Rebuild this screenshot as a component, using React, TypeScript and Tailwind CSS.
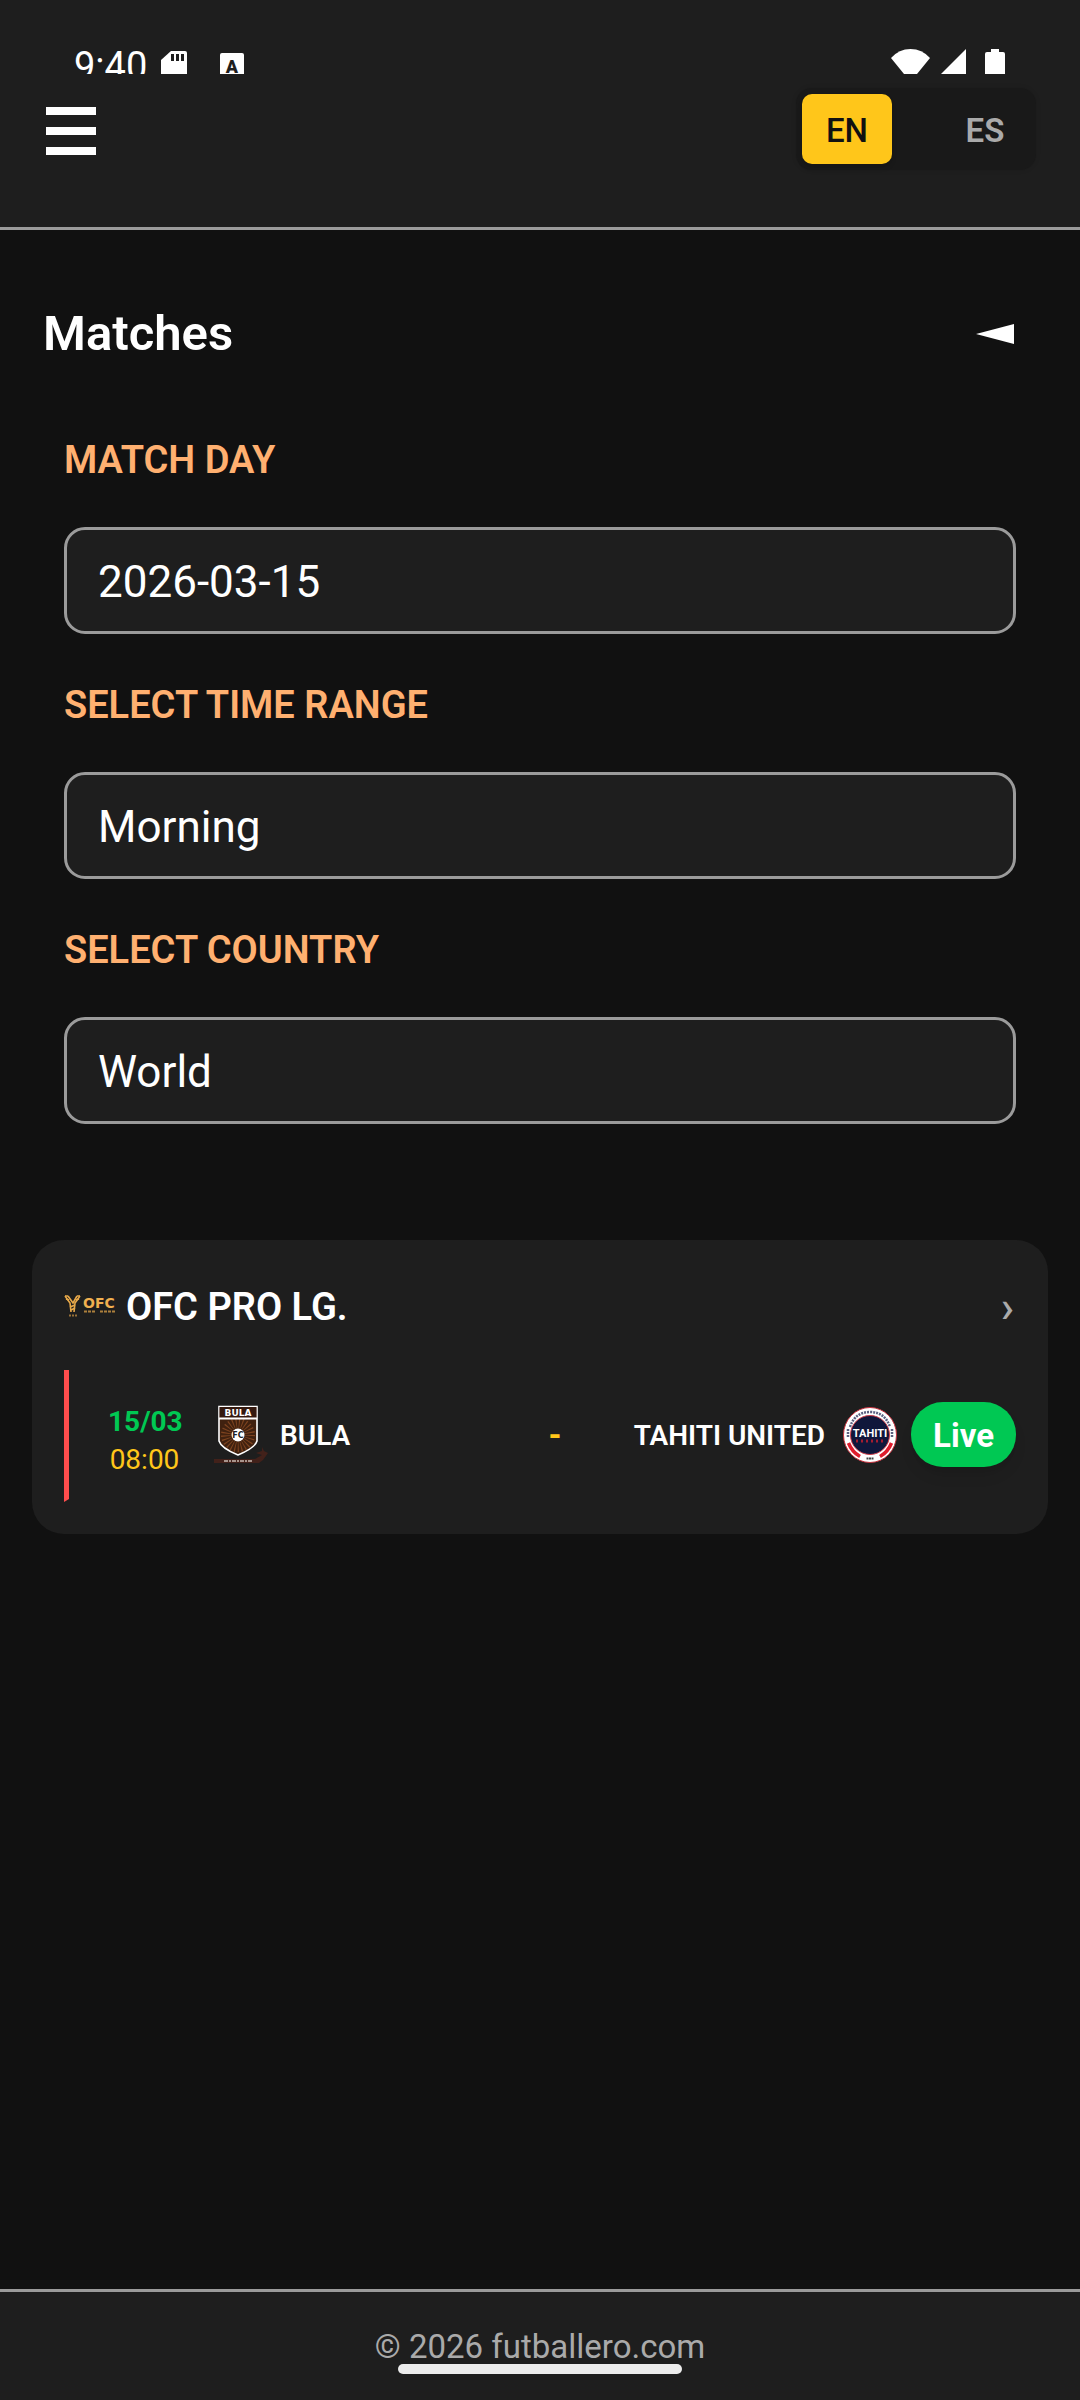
import { useState } from "react";
import clsx from "clsx";

const LANGUAGES = ["EN", "ES"];

function StatusBar() {
  return (
    <div className="flex h-[74px] items-start justify-between overflow-hidden pl-[74px] pr-[75px]">
      <div className="flex items-start">
        <span className="pt-[44px] text-[38px] leading-[44px]">9:40</span>
        <svg className="ml-[14px] mt-[51px] h-[34px] w-[26px]" viewBox="0 0 26 34" fill="#fff">
          <path d="M10 0H24Q26 0 26 2V34H0V9Z" />
          <path d="M10 3h3v7h-3zM15 3h3v7h-3zM20 3h3v7h-3z" fill="#1e1e1e" />
        </svg>
        <svg className="ml-[33px] mt-[53px] h-[28px] w-[24px]" viewBox="0 0 24 28">
          <rect width="24" height="28" rx="2" fill="#fff" />
          <text x="12" y="20" textAnchor="middle" fontSize="18" fontWeight="900" fill="#1e1e1e">
            A
          </text>
        </svg>
      </div>
      <div className="flex items-start pt-[49px]">
        <svg className="h-[44px] w-[39px]" viewBox="0 0 39 44" fill="#fff">
          <path d="M0 9Q8 0 19.500 0T39 9L19.500 33Z" />
        </svg>
        <svg className="ml-[11px] h-[25px] w-[25px]" viewBox="0 0 25 25" fill="#fff">
          <path d="M25 0V25H0Z" />
        </svg>
        <svg className="ml-[19px] h-[32px] w-[20px]" viewBox="0 0 20 32" fill="#fff">
          <path d="M6 0h8v3h4q2 0 2 2v27H0V5q0-2 2-2h4z" />
        </svg>
      </div>
    </div>
  );
}

function LanguageSwitch() {
  const [lang, setLang] = useState("EN");

  return (
    <div className="flex h-[82px] w-[240px] items-center justify-between rounded-2xl bg-[#191919] px-[6px] shadow-[0_0_4px_1px_rgba(0,0,0,0.08)]">
      {LANGUAGES.map((code) => (
        <button
          key={code}
          type="button"
          onClick={() => setLang(code)}
          className={clsx(
            "h-[70px] w-[90px] rounded-[10px] pt-[3px] text-[33px]",
            code === lang ? "bg-[#ffc61a] font-medium text-[#111] shadow-md" : "font-semibold text-[#aaa]"
          )}
        >
          {code}
        </button>
      ))}
    </div>
  );
}

function LeagueLogo() {
  return (
    <svg className="h-[24px] w-[53px]" viewBox="0 0 53 24">
      <g stroke="#e8a94a" fill="none" strokeWidth="1.600">
        <path d="M1 1L6 8L7 17M16 1L11 8L10 17M4 1L9 8L13 1" />
        <path d="M1 1h3M13 1h3M2 4l3 1M15 4l-3 1M6 12l5-2M7 15l4-2" />
        <path d="M5 20.500h8" strokeDasharray="2 1" strokeWidth="2" opacity="0.600" />
      </g>
      <text x="19" y="13" fontSize="14" fontWeight="700" fontFamily="DejaVu Sans" fill="#f0b050">
        OFC
      </text>
      <path d="M20 16.500h12M36 16.500h16" stroke="#e8a94a" strokeWidth="2" strokeDasharray="3 1" opacity="0.700" />
    </svg>
  );
}

function BulaCrest() {
  return (
    <svg className="h-[60px] w-[56px] shrink-0" viewBox="0 0 56 60">
      <path d="M6 1.500H44V36Q42 43 25 50Q8 43 6 36Z" fill="#40210f" stroke="#fff" strokeWidth="1.600" />
      <circle cx="25" cy="30" r="12" fill="none" stroke="#7d431f" strokeWidth="10" strokeDasharray="1 2" />
      <path d="M6.500 2H43.500V13H6.500Z" fill="#34190f" />
      <path d="M6 13.500H44" stroke="#fff" strokeWidth="2" />
      <text x="25" y="10.500" textAnchor="middle" fontSize="9" fontWeight="700" fontFamily="DejaVu Sans" fill="#fff">
        BULA
      </text>
      <circle cx="25" cy="30" r="6.500" fill="#fff" />
      <text x="25" y="33" textAnchor="middle" fontSize="8" fontWeight="700" fontFamily="DejaVu Sans" fill="#222">
        FC
      </text>
      <path d="M1 54H42L49 50L43 48L49 46L49 42L51 46L55 48L50 55L46 58H1Z" fill="#42211a" />
      <path d="M11 56H39" stroke="#c9bab2" strokeWidth="1.400" strokeDasharray="4 1 2 1" />
    </svg>
  );
}

function TahitiCrest() {
  return (
    <svg className="h-[56px] w-[54px] shrink-0" viewBox="0 0 54 56">
      <ellipse cx="27" cy="28" rx="26.500" ry="27.500" fill="#fff" stroke="#c6303c" strokeWidth="1" />
      <path d="M7 20Q12 5 27 5T47 20" fill="none" stroke="#5b6180" strokeWidth="2.500" strokeDasharray="2 1" />
      <path d="M5 22V30M49 22V30" stroke="#5b6180" strokeWidth="2.500" strokeDasharray="2 1" />
      <path d="M5.500 36Q9 45 17 49.500M48.500 36Q45 45 37 49.500" fill="none" stroke="#e01b2c" strokeWidth="3.500" />
      <ellipse cx="27" cy="28" rx="19.500" ry="19.500" fill="#10173b" stroke="#d0404c" strokeWidth="1" />
      <text
        x="27"
        y="30"
        textAnchor="middle"
        fontSize="11"
        fontWeight="700"
        fontFamily="Liberation Sans Narrow, Roboto"
        fill="#fff"
      >
        TAHITI
      </text>
      <path d="M13 34H42" stroke="#a51d30" strokeWidth="3" strokeDasharray="2 3" />
      <path d="M23.500 51.500H31" stroke="#444" strokeWidth="2" strokeDasharray="2 0.500" />
    </svg>
  );
}

const labelClass = "text-[38px] leading-[52px] font-semibold uppercase text-[#ffb070]";
const fieldClass =
  "mt-[41px] block h-[107px] w-full appearance-none rounded-[21px] border-[3px] border-[#9b9b9b] bg-[#1e1e1e] px-[31px] pt-[3px] text-[44px] text-white outline-none";

function Filters() {
  const [day, setDay] = useState("2026-03-15");

  return (
    <form className="mt-[68px] flex flex-col gap-[45px] px-16">
      <div>
        <label htmlFor="day" className={labelClass}>Match day</label>
        <input id="day" type="text" value={day} onChange={(e) => setDay(e.target.value)} className={fieldClass} />
      </div>
      <div>
        <label htmlFor="range" className={labelClass}>Select time range</label>
        <select id="range" className={fieldClass}>
          <option>Morning</option>
          <option>Afternoon</option>
          <option>Night</option>
        </select>
      </div>
      <div>
        <label htmlFor="country" className={labelClass}>Select country</label>
        <select id="country" className={fieldClass}>
          <option>World</option>
        </select>
      </div>
    </form>
  );
}

function LeagueCard() {
  return (
    <section className="mx-8 mt-[116px] rounded-[32px] bg-[#1e1e1e] px-8 pb-8 pt-[43px]">
      <div className="flex h-[48px] items-center">
        <LeagueLogo />
        <h2 className="ml-[9px] flex-1 text-[38px] font-semibold">OFC PRO LG.</h2>
        <button type="button" aria-label="Open league" className="pr-[2px] text-[44px] font-medium leading-[48px] text-[#aaa]">
          ›
        </button>
      </div>

      <div className="mt-[39px] flex h-[132px] items-center border-b-[3px] border-l-[5px] border-b-[#1e1e1e] border-l-[#ff4d4d] text-[28px] leading-[38px]">
        <div className="ml-[39px] w-[73px] pt-3 text-center">
          <p className="font-bold text-[#00c853]">15/03</p>
          <p className="text-[#ffc61a]">08:00</p>
        </div>
        <div className="ml-[32px] flex flex-1 items-center gap-[11px]">
          <BulaCrest />
          <span className="pt-[2px] font-semibold">BULA</span>
        </div>
        <span className="text-[33px] font-bold text-[#ffc61a]">-</span>
        <div className="flex flex-1 items-center justify-end gap-[18px]">
          <span className="whitespace-nowrap pt-[2px] font-semibold">TAHITI UNITED</span>
          <TahitiCrest />
        </div>
        <button type="button" className="ml-[14px] h-[65px] w-[105px] rounded-[32px] bg-[#00c853] pt-[2px] text-[33px] font-bold shadow-lg">
          Live
        </button>
      </div>
    </section>
  );
}

export default function App() {
  return (
    <div className="flex min-h-screen flex-col bg-[#111] font-['Roboto',sans-serif] text-white">
      <header className="border-b-[3px] border-[#9b9b9b] bg-[#1e1e1e]">
        <StatusBar />
        <div className="flex items-center justify-between pb-[57px] pl-[46px] pr-[44px] pt-[14px]">
          <button type="button" aria-label="Menu">
            <svg className="h-[52px] w-[50px]" viewBox="0 0 50 52" fill="#fff">
              <path d="M0 4h50v8H0zM0 24h50v8H0zM0 44h50v8H0z" />
            </svg>
          </button>
          <LanguageSwitch />
        </div>
      </header>

      <main className="flex-1">
        <div className="mt-[72px] flex h-[64px] items-center justify-between pl-[43px] pr-[66px]">
          <h1 className="text-[49px] font-semibold">Matches</h1>
          <button type="button" aria-label="Toggle filters">
            <svg className="h-[20px] w-[38px]" viewBox="0 0 38 20" fill="#fff">
              <path d="M0 10L38 0V20Z" />
            </svg>
          </button>
        </div>
        <Filters />
        <LeagueCard />
      </main>

      <footer className="relative border-t-[3px] border-[#9b9b9b] bg-[#1e1e1e] pb-[30px] pt-[32px] text-center text-[33px] leading-[46px] text-[#aaa]">
        © 2026 futballero.com
        <div className="absolute bottom-[26px] left-1/2 h-[10px] w-[284px] -translate-x-1/2 rounded-full bg-[#ececec]" />
      </footer>
    </div>
  );
}
